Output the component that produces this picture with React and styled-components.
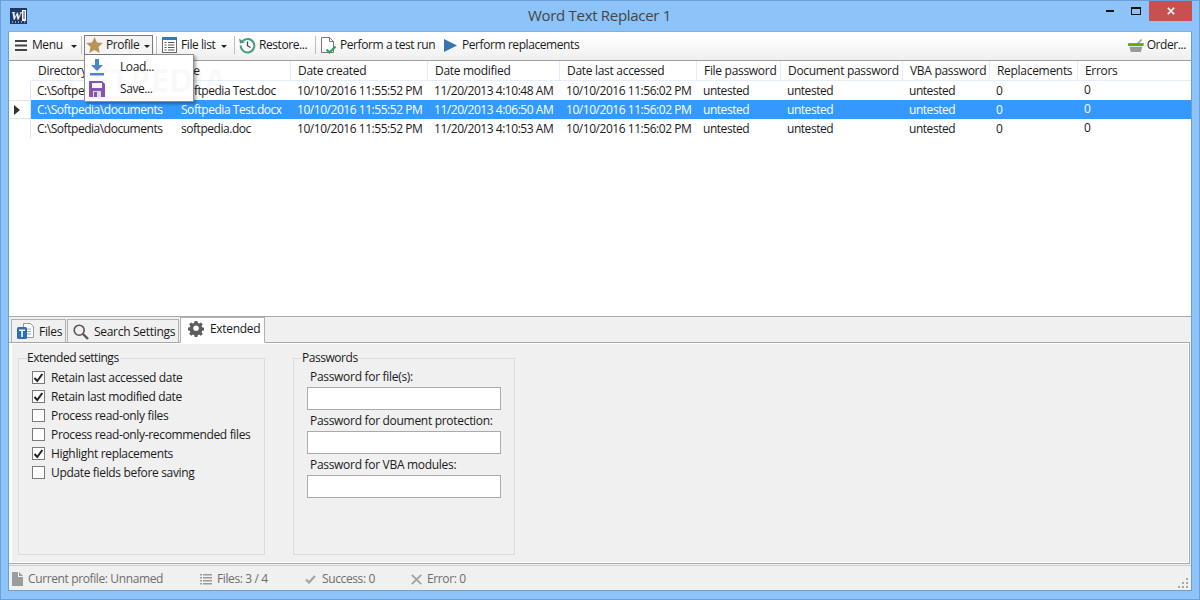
import React from "react";
import styled, { createGlobalStyle } from "styled-components";

const Global = createGlobalStyle`
  html, body { margin: 0; padding: 0; background: #8cc4fa; }
  * { box-sizing: border-box; }
`;

const FONT = `"Open Sans", "Noto Sans", "Liberation Sans", sans-serif`;
const COLS = "144px 116px 137px 132px 137px 84px 122px 87px 88px 1fr";

const Win = styled.div`
  position: relative;
  width: 1200px;
  height: 600px;
  background: #8cc4fa;
  border: 1px solid #6a9ed6;
  display: flex;
  flex-direction: column;
  font: 12px/16px ${FONT};
  letter-spacing: -0.3px;
  color: #1a1a1a;
  overflow: hidden;
`;
const TitleBar = styled.header`
  height: 30px;
  flex: none;
  display: flex;
  align-items: flex-start;
  padding-left: 9px;
  position: relative;
`;
const AppIcon = styled.svg`
  width: 17px;
  height: 16px;
  margin-top: 7px;
`;
const Title = styled.div`
  flex: 1;
  text-align: center;
  font-size: 15px;
  line-height: 28px;
  letter-spacing: -0.3px;
  color: #444;
  padding-left: 76px;
`;
const Controls = styled.div`
  display: flex;
  align-items: flex-start;
`;
const Ctl = styled.div`
  width: ${p => p.$w}px;
  height: 20px;
  display: flex;
  align-items: center;
  justify-content: center;
  margin-right: ${p => p.$mr || 0}px;
  background: ${p => p.$close ? "#c75050" : "transparent"};
`;
const Client = styled.main`
  flex: 1;
  margin: 0 7px 8px 7px;
  background: #f0f0f0;
  border: 1px solid #6f9ecc;
  border-top: 1px solid #7fb0e0;
  display: flex;
  flex-direction: column;
  min-height: 0;
`;
const Toolbar = styled.div`
  height: 29px;
  flex: none;
  display: flex;
  align-items: center;
  padding: 0 5px 2px 1px;
  background: linear-gradient(#ffffff, #fbfbfb 40%, #eeeeee);
  border-bottom: 1px solid #a0a0a0;
  position: relative;
  letter-spacing: -0.42px;
`;
const ToolBtn = styled.div`
  width: ${p => p.$w}px;
  height: 20px;
  flex: none;
  display: flex;
  align-items: center;
  padding-left: ${p => p.$pl || 0}px;
  gap: ${p => p.$gap ?? 4}px;
  white-space: nowrap;
  ${p => p.$open && `
    background: #f4f4f4;
    outline: 1px solid #7a7a7a;
    outline-offset: -1px;
    position: relative;
    z-index: 3;
  `}
`;
const Sep = styled.div`
  width: 1px;
  height: 18px;
  flex: none;
  background: #bdbdbd;
  margin: ${p => p.$m};
`;
const Caret = styled.span`
  width: 0;
  height: 0;
  border-left: 3px solid transparent;
  border-right: 3px solid transparent;
  border-top: 3px solid #222;
  margin-left: ${p => p.$ml || 3}px;
  margin-top: 2px;
`;
const Spacer = styled.div`flex: 1;`;

const List = styled.section`
  height: 256px;
  flex: none;
  background: #fff;
  border-bottom: 1px solid #a8a8a8;
  display: flex;
  flex-direction: column;
`;
const HeadRow = styled.div`
  display: grid;
  grid-template-columns: 22px ${COLS};
  height: 20px;
`;
const HeadCell = styled.div`
  padding-left: ${p => p.$pl ?? 7}px;
  line-height: 20px;
  border-right: ${p => p.$plain ? "none" : "1px solid #e4edf8"};
  border-bottom: ${p => p.$gutter ? "none" : "1px solid #e4edf8"};
  white-space: nowrap;
  overflow: hidden;
`;
const Row = styled.div`
  display: grid;
  grid-template-columns: 22px ${COLS};
  height: 19px;
`;
const Gutter = styled.div`
  border-right: 1px solid #dfe7f2;
  border-top: ${p => p.$sel ? "1px solid #dfe7f2" : "none"};
  border-bottom: ${p => p.$sel ? "1px solid #dfe7f2" : "none"};
  display: flex;
  align-items: center;
  padding-left: 5px;
`;
const Arrow = styled.span`
  width: 0;
  height: 0;
  border-top: 5px solid transparent;
  border-bottom: 5px solid transparent;
  border-left: 6px solid #333;
`;
const Cell = styled.div`
  padding-left: ${p => p.$pl ?? 6}px;
  line-height: ${p => p.$up ? 17 : 19}px;
  letter-spacing: -0.46px;
  white-space: nowrap;
  overflow: hidden;
  background: ${p => p.$sel ? "#3399ff" : "#fff"};
  color: ${p => p.$sel ? "#fff" : "#1a1a1a"};
`;

const Menu = styled.div`
  position: absolute;
  left: 75px;
  top: 22px;
  width: 110px;
  height: 48px;
  background: #fff;
  border: 1px solid #8f8f8f;
  box-shadow: 2px 2px 3px rgba(0,0,0,.35);
  z-index: 2;
  display: flex;
  flex-direction: column;
  padding-top: 1px;
`;
const MenuItem = styled.div`
  height: 22px;
  display: flex;
  align-items: center;
  gap: 15px;
  padding-left: 4px;
`;
const Watermark = styled.div`
  position: absolute;
  left: 39px;
  top: 28px;
  font: 700 33px/40px ${FONT};
  letter-spacing: 0;
  color: rgba(170,170,170,.08);
  z-index: 4;
  pointer-events: none;
`;

const TabStrip = styled.div`
  height: 26px;
  flex: none;
  background: #f0f0f0;
  display: flex;
  align-items: flex-end;
  padding-left: 2px;
  margin-right: 1px;
  border-bottom: 1px solid #a8a8a8;
`;
const Tab = styled.div`
  height: ${p => p.$active ? 26 : 24}px;
  width: ${p => p.$w}px;
  display: flex;
  align-items: center;
  gap: ${p => p.$gap ?? 5}px;
  padding-left: ${p => p.$pl}px;
  padding-top: 1px;
  margin-right: 1px;
  margin-bottom: -1px;
  border: 1px solid #b0b0b0;
  border-bottom: ${p => p.$active ? "1px solid #fff" : "1px solid #a8a8a8"};
  background: ${p => p.$active ? "#fff" : "#f0f0f0"};
  padding-bottom: ${p => p.$active ? 3 : 0}px;
  white-space: nowrap;
`;
const PanelFrame = styled.div`
  height: 221px;
  flex: none;
  margin: 0 1px 1px 0;
  background: #fff;
  padding: 1px 1px 1px 3px;
  border-right: 1px solid #aaa;
  border-bottom: 1px solid #aaa;
`;
const Panel = styled.div`
  height: 100%;
  background: #f0f0f0;
  display: flex;
  align-items: flex-start;
  padding: 6px 0 0 6px;
  gap: 28px;
`;
const Group = styled.fieldset`
  margin: 0;
  width: ${p => p.$w}px;
  height: 205px;
  border: 1px solid #dcdcdc;
  padding: 0;
  display: flex;
  flex-direction: column;
  min-inline-size: 0;
`;
const Legend = styled.legend`
  margin-left: 8px;
  padding: 0 1px 0 0;
  line-height: 16px;
  letter-spacing: -0.46px;
`;
const Checks = styled.div`
  display: flex;
  flex-direction: column;
  padding: 2px 0 0 13px;
  letter-spacing: -0.34px;
`;
const CheckRow = styled.div`
  height: 19px;
  display: flex;
  align-items: center;
  gap: 6px;
`;
const Box = styled.span`
  width: 13px;
  height: 13px;
  background: #fff;
  border: 1px solid #7a7a7a;
  display: flex;
  align-items: center;
  justify-content: center;
`;
const Fields = styled.div`
  display: flex;
  flex-direction: column;
  padding: 3px 0 0 13px;
`;
const FieldLabel = styled.label`
  height: 18px;
  line-height: 16px;
  padding-left: 3px;
  margin-top: ${p => p.$mt || 0}px;
`;
const FieldInput = styled.div`
  width: 194px;
  height: 23px;
  background: #fff;
  border: 1px solid #aaa;
`;
const Status = styled.footer`
  flex: 1;
  min-height: 0;
  position: relative;
  display: flex;
  align-items: center;
  padding: 2px 0 0 3px;
  color: #6d6d6d;
  letter-spacing: -0.38px;
  border-top: 1px solid #cfcfcf;
`;
const StatusItem = styled.div`
  width: ${p => p.$w}px;
  flex: none;
  display: flex;
  align-items: center;
  gap: ${p => p.$gap ?? 5}px;
  white-space: nowrap;
`;
const Grip = styled.svg`
  position: absolute;
  right: 2px;
  bottom: 1px;
  width: 11px;
  height: 11px;
`;

const IHamb = () => <svg width="12" height="11" viewBox="0 0 12 11"><path d="M0 0h12v2H0zM0 4.5h12v2H0zM0 9h12v2H0z" fill="#444"/></svg>;
const IStar = () => <svg width="17" height="16" viewBox="0 0 17 16"><path d="M8.5 0l2.500 5.500 5.800.6-4.300 3.900 1.200 5.900-5.200-3-5.200 3 1.200-5.900L.2 6.100 6 5.500z" fill="#b8935a"/></svg>;
const IList = () => <svg width="15" height="16" viewBox="0 0 15 16"><rect x=".5" y=".5" width="14" height="15" fill="#fff" stroke="#666"/><rect x="0" y="0" width="15" height="3" fill="#3a78b4"/><path d="M2.500 5.500h2M6 5.500h6.500M2.500 8h2M6 8h6.500M2.500 10.500h2M6 10.500h6.500M2.500 13h2M6 13h6.500" stroke="#555"/></svg>;
const IRestore = () => <svg width="17" height="17" viewBox="0 0 17 17" fill="none"><path d="M3.400 4.200A6.800 6.800 0 1 1 1.700 8.500" stroke="#3f9d7c" strokeWidth="2"/><path d="M0 1.500l1 5 5-1z" fill="#3f9d7c"/><path d="M8.500 4.500v4.200l3 1.800" stroke="#444" strokeWidth="1.300"/></svg>;
const ITest = () => <svg width="16" height="17" viewBox="0 0 16 17" fill="none"><path d="M.5.5h8l4 4v11H.5z" fill="#fff" stroke="#777"/><path d="M8.500.5v4h4" stroke="#777"/><path d="M5.500 12.500l3 3 6-6" stroke="#2f9a62" strokeWidth="2"/></svg>;
const IPlay = () => <svg width="13" height="13" viewBox="0 0 13 13"><path d="M0 0l13 6.500L0 13z" fill="#3a74b0"/></svg>;
const IBasket = () => <svg width="17" height="16" viewBox="0 0 17 16"><path d="M9 7l5-5.500 1.400 1.200L11.500 7z" fill="#a0a0a0"/><rect x="0" y="6" width="17" height="3" fill="#5fa800"/><path d="M1.500 10h14l-1.500 5.500H3z" fill="#9a9a9a"/></svg>;
const ILoad = () => <svg width="16" height="17" viewBox="0 0 16 17"><path d="M6 0h4v6h4l-6 6-6-6h4z" fill="#4a87c4"/><rect x="1" y="14" width="14" height="2.500" fill="#4a87c4"/></svg>;
const ISave = () => <svg width="16" height="16" viewBox="0 0 16 16"><path d="M0 0h13l3 3v13H0z" fill="#8b51b0"/><rect x="3" y="2" width="10" height="5" fill="#fff"/><rect x="4" y="10" width="8" height="6" fill="#ddd"/><rect x="5" y="11" width="3" height="5" fill="#8b51b0"/></svg>;
const IFiles = () => <svg width="17" height="17" viewBox="0 0 17 17"><path d="M6.500.5h7l3 3v11h-10z" fill="#fff" stroke="#999"/><path d="M9 6h5M9 8.500h5M9 11h5" stroke="#aaa"/><rect x="0" y="4" width="10" height="12" rx="1.500" fill="#2f6fb3"/><path d="M2 6.500h6v1.600H5.800V14H4.200V8.100H2z" fill="#fff"/></svg>;
const ISearch = () => <svg width="16" height="16" viewBox="0 0 16 16" fill="none"><circle cx="6.200" cy="6.200" r="5" stroke="#555" strokeWidth="1.600"/><path d="M10 10l5 5" stroke="#555" strokeWidth="2.400"/></svg>;
const IGear = () => <svg width="16" height="16" viewBox="0 0 16 16"><path fill="#5c5c5c" fillRule="evenodd" d="M6.500 0h3l.4 2.200 1.400.6L13.200 1.500l2.100 2.100-1.300 1.900.6 1.400 2.200.4v3l-2.200.4-.6 1.400 1.300 1.900-2.100 2.100-1.900-1.300-1.400.6-.4 2.200h-3l-.4-2.200-1.400-.6-1.900 1.300L.5 13.900l1.300-1.900-.6-1.400L-1 10.200v-3l2.200-.4.600-1.400L.5 3.600 2.600 1.500l1.900 1.300 1.400-.6zM8 5a3 3 0 1 0 0 6 3 3 0 0 0 0-6z" transform="translate(0.700 0) scale(.92)"/></svg>;
const ICheckMark = () => <svg width="11" height="10" viewBox="0 0 11 10" fill="none"><path d="M1.500 5l2.800 3 5-7" stroke="#222" strokeWidth="2"/></svg>;
const IDoc = () => <svg width="11" height="14" viewBox="0 0 11 14"><path d="M0 0h6v5h5v9H0zM7 0l4 4H7z" fill="#9c9c9c"/></svg>;
const ILines = () => <svg width="12" height="11" viewBox="0 0 12 11"><path d="M0 0h2v1.500H0zM3 0h9v1.500H3zM0 3h2v1.500H0zM3 3h9v1.500H3zM0 6h2v1.500H0zM3 6h9v1.500H3zM0 9h2v1.500H0zM3 9h9v1.500H3z" fill="#9c9c9c"/></svg>;
const IOk = () => <svg width="11" height="9" viewBox="0 0 11 9" fill="none"><path d="M1 4.500l3 3 6-6.500" stroke="#a4a4a4" strokeWidth="2.200"/></svg>;
const IX = () => <svg width="11" height="11" viewBox="0 0 11 11" fill="none"><path d="M.8.8l9.400 9.400M10.200.8L.8 10.200" stroke="#a0a0a0" strokeWidth="1.700"/></svg>;

const heads = ["Directory", "File", "Date created", "Date modified", "Date last accessed", "File password", "Document password", "VBA password", "Replacements", "Errors"];
const rows = [
  ["C:\\Softpedia\\documents", "Softpedia Test.doc", "10/10/2016 11:55:52 PM", "11/20/2013 4:10:48 AM"],
  ["C:\\Softpedia\\documents", "Softpedia Test.docx", "10/10/2016 11:55:52 PM", "11/20/2013 4:06:50 AM"],
  ["C:\\Softpedia\\documents", "softpedia.doc", "10/10/2016 11:55:52 PM", "11/20/2013 4:10:53 AM"],
];
const checks = [
  ["Retain last accessed date", true],
  ["Retain last modified date", true],
  ["Process read-only files", false],
  ["Process read-only-recommended files", false],
  ["Highlight replacements", true],
  ["Update fields before saving", false],
];

export default function App() {
  return (
    <Win>
      <Global />
      <TitleBar>
        <AppIcon viewBox="0 0 17 16">
          <rect width="17" height="16" fill="#1f3864" />
          <rect x="12" y="2" width="4" height="11" fill="#fff" />
          <path d="M13 4h2M13 6h2M13 8h2M13 10h2" stroke="#1f3864" />
          <text x="1" y="11.500" fontFamily="Liberation Serif, serif" fontStyle="italic" fontWeight="700" fontSize="12" fill="#fff">W</text>
          <path d="M2 14h13" stroke="#fff" strokeDasharray="1 2" />
        </AppIcon>
        <Title>Word Text Replacer 1</Title>
        <Controls>
          <Ctl $w={27}><svg width="8" height="2"><rect width="8" height="2" fill="#111" /></svg></Ctl>
          <Ctl $w={26}><svg width="10" height="8" viewBox="0 0 10 8" fill="none"><rect x=".5" y=".5" width="9" height="7" stroke="#111" /><rect width="10" height="2" fill="#111" /></svg></Ctl>
          <Ctl $w={43} $close $mr={7}><svg width="8" height="8" viewBox="0 0 8 8" fill="none"><path d="M.8.8l6.400 6.400M7.200.8L.8 7.200" stroke="#fff" strokeWidth="1.600" /></svg></Ctl>
        </Controls>
      </TitleBar>
      <Client>
        <Toolbar>
          <ToolBtn $w={68} $pl={5} $gap={5}><IHamb />Menu<Caret $ml={3} /></ToolBtn>
          <Sep $m="0 2px 0 3px" />
          <ToolBtn $w={69} $pl={2} $gap={3} $open><IStar />Profile<Caret $ml={2} /></ToolBtn>
          <Sep $m="0 5px 0 3px" />
          <ToolBtn $w={72} $gap={4}><IList />File list<Caret $ml={2} /></ToolBtn>
          <Sep $m="0 4px 0 0" />
          <ToolBtn $w={76} $gap={3}><IRestore />Restore...</ToolBtn>
          <Sep $m="0 5px 0 0" />
          <ToolBtn $w={123} $gap={3}><ITest />Perform a test run</ToolBtn>
          <ToolBtn $w={140} $gap={5}><IPlay />Perform replacements</ToolBtn>
          <Spacer />
          <ToolBtn $w={58} $gap={3}><IBasket />Order...</ToolBtn>
          <Menu>
            <MenuItem><ILoad />Load...</MenuItem>
            <MenuItem><ISave />Save...</MenuItem>
          </Menu>
          <Watermark>SOFTPEDIA</Watermark>
        </Toolbar>
        <List>
          <HeadRow>
            <HeadCell $plain $gutter />
            {heads.map((h, i) => <HeadCell key={h} $plain={i === 9}>{h}</HeadCell>)}
          </HeadRow>
          {rows.map((r, i) => {
            const sel = i === 1;
            return (
              <Row key={r[1]}>
                <Gutter $sel={sel}>{sel && <Arrow />}</Gutter>
                {r.map((c, j) => <Cell key={j} $sel={sel}>{c}</Cell>)}
                <Cell $sel={sel}>10/10/2016 11:56:02 PM</Cell>
                <Cell $sel={sel}>untested</Cell>
                <Cell $sel={sel}>untested</Cell>
                <Cell $sel={sel}>untested</Cell>
                <Cell $sel={sel}>0</Cell>
                <Cell $sel={sel} $up>0</Cell>
              </Row>
            );
          })}
        </List>
        <TabStrip>
          <Tab $w={55} $pl={5}><IFiles />Files</Tab>
          <Tab $w={112} $pl={5}><ISearch />Search Settings</Tab>
          <Tab $w={85} $pl={7} $gap={6} $active><IGear />Extended</Tab>
        </TabStrip>
        <PanelFrame>
          <Panel>
            <Group $w={247}>
              <Legend>Extended settings</Legend>
              <Checks>
                {checks.map(([t, on]) => (
                  <CheckRow key={t}><Box>{on && <ICheckMark />}</Box>{t}</CheckRow>
                ))}
              </Checks>
            </Group>
            <Group $w={222}>
              <Legend>Passwords</Legend>
              <Fields>
                <FieldLabel>Password for file(s):</FieldLabel>
                <FieldInput />
                <FieldLabel $mt={3}>Password for doument protection:</FieldLabel>
                <FieldInput />
                <FieldLabel $mt={3}>Password for VBA modules:</FieldLabel>
                <FieldInput />
              </Fields>
            </Group>
          </Panel>
        </PanelFrame>
        <Status>
          <StatusItem $w={188}><IDoc />Current profile: Unnamed</StatusItem>
          <StatusItem $w={105}><ILines />Files: 3 / 4</StatusItem>
          <StatusItem $w={106} $gap={6}><IOk />Success: 0</StatusItem>
          <StatusItem $w={80}><IX />Error: 0</StatusItem>
          <Grip viewBox="0 0 11 11"><path d="M8 0h2v2H8zM4 4h2v2H4zM8 4h2v2H8zM0 8h2v2H0zM4 8h2v2H4zM8 8h2v2H8z" fill="#a8a8a8" /></Grip>
        </Status>
      </Client>
    </Win>
  );
}
